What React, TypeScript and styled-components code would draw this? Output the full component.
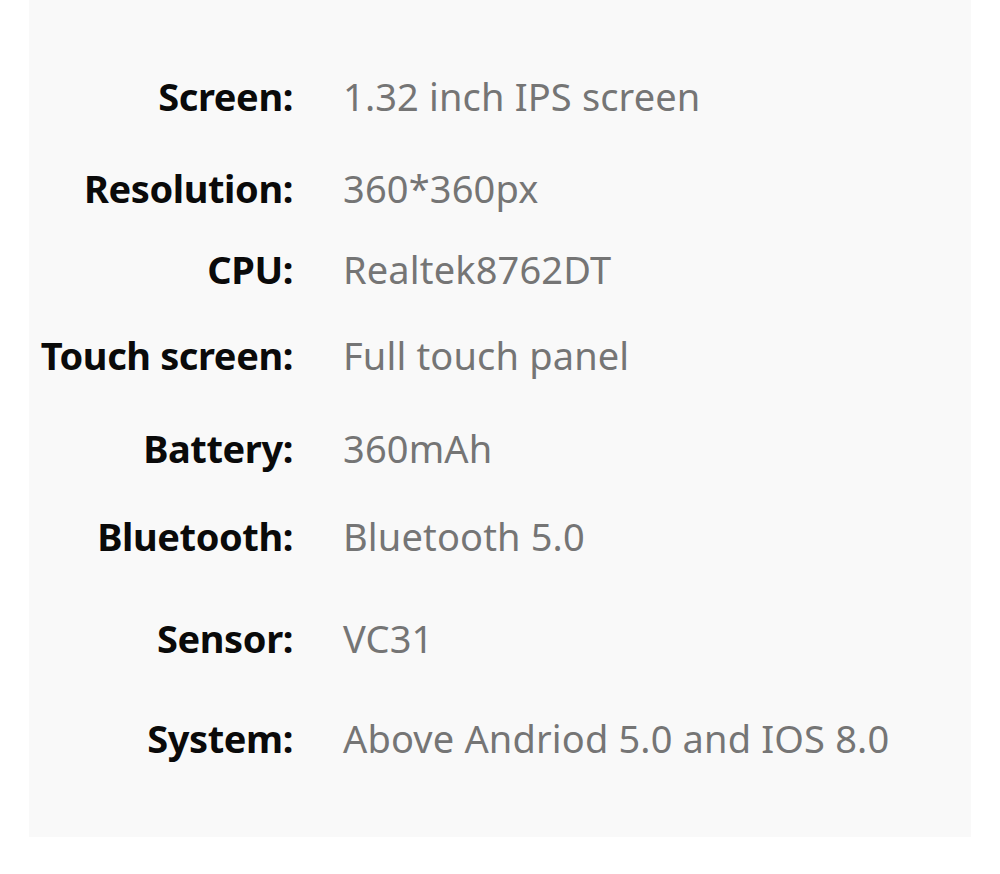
import React from 'react'
import styled, { createGlobalStyle } from 'styled-components'

const GlobalStyle = createGlobalStyle`
  body {
    margin: 0;
    background: #ffffff;
    font-family: "Noto Sans", "Open Sans", sans-serif;
  }
`

const Panel = styled.section`
  margin-left: 29px;
  width: 942px;
  background: #f9f9f9;
  padding: 69px 0 72px;
`

const Row = styled.div<{ $space: number }>`
  display: grid;
  grid-template-columns: 264px 1fr;
  column-gap: 50px;
  margin-top: ${(p) => p.$space}px;
  font-size: 38px;
  line-height: 54px;
`

const Label = styled.span`
  text-align: right;
  font-weight: 700;
  letter-spacing: -0.4px;
  color: #0a0a0a;
  white-space: nowrap;
`

const Value = styled.span`
  color: #757575;
  letter-spacing: 0.15px;
  white-space: nowrap;
`

const specs = [
  { label: 'Screen:', value: '1.32 inch IPS screen', space: 0 },
  { label: 'Resolution:', value: '360*360px', space: 38 },
  { label: 'CPU:', value: 'Realtek8762DT', space: 27 },
  { label: 'Touch screen:', value: 'Full touch panel', space: 32 },
  { label: 'Battery:', value: '360mAh', space: 39 },
  { label: 'Bluetooth:', value: 'Bluetooth 5.0', space: 34 },
  { label: 'Sensor:', value: 'VC31', space: 48 },
  { label: 'System:', value: 'Above Andriod 5.0 and IOS 8.0', space: 46 },
]

export default function App() {
  return (
    <>
      <GlobalStyle />
      <Panel>
        {specs.map((s) => (
          <Row key={s.label} $space={s.space}>
            <Label>{s.label}</Label>
            <Value>{s.value}</Value>
          </Row>
        ))}
      </Panel>
    </>
  )
}
